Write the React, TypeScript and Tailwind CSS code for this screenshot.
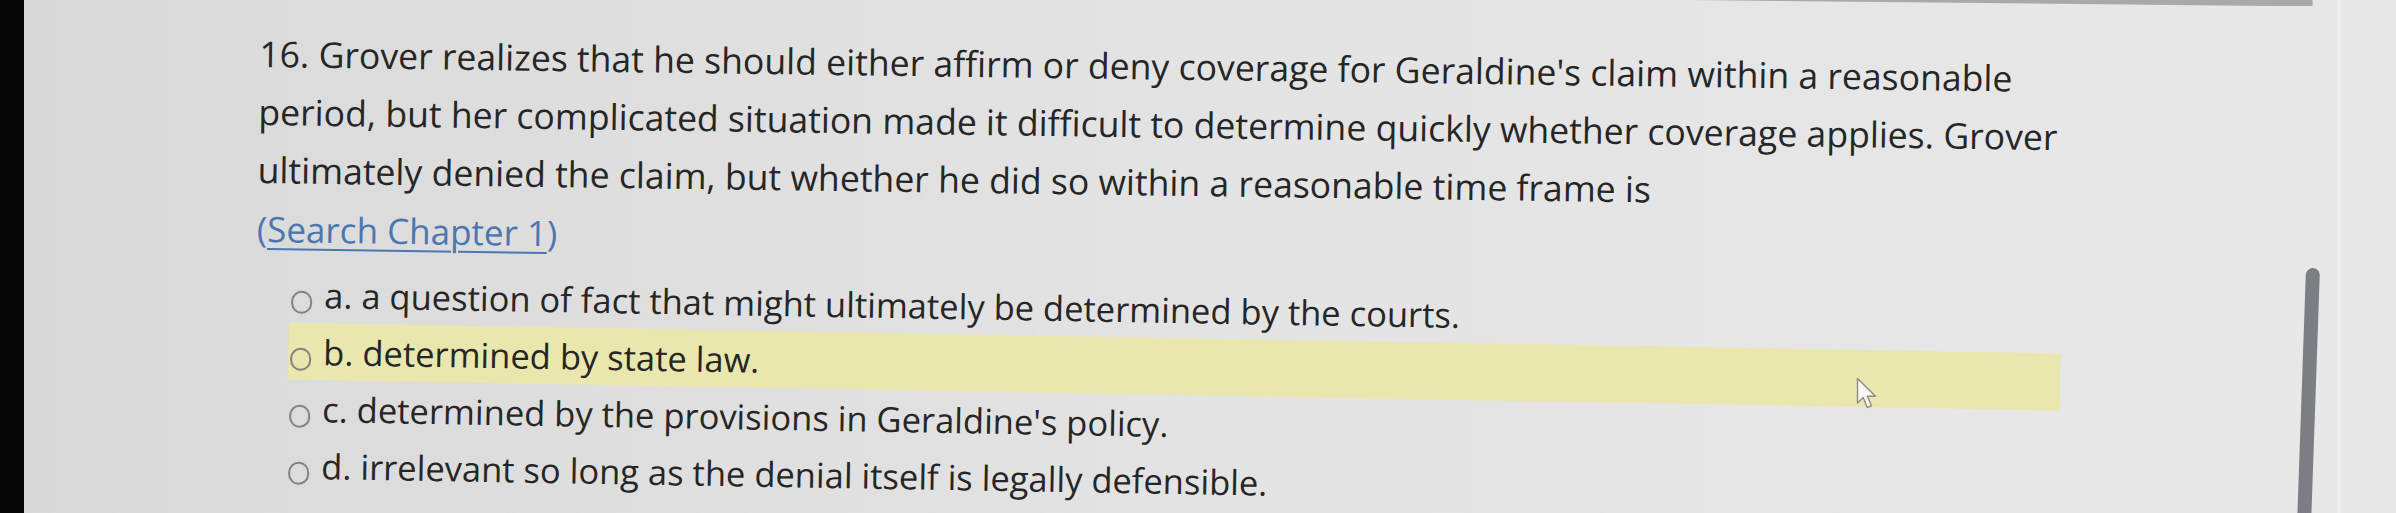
import React from "react";

const questionLines = [
  "16. Grover realizes that he should either affirm or deny coverage for Geraldine's claim within a reasonable",
  "period, but her complicated situation made it difficult to determine quickly whether coverage applies. Grover",
  "ultimately denied the claim, but whether he did so within a reasonable time frame is",
];

const options = [
  { key: "a", text: "a. a question of fact that might ultimately be determined by the courts.", hl: false },
  { key: "b", text: "b. determined by state law.", hl: true },
  { key: "c", text: "c. determined by the provisions in Geraldine's policy.", hl: false },
  { key: "d", text: "d. irrelevant so long as the denial itself is legally defensible.", hl: false },
];

function Cursor() {
  return (
    <svg width="22" height="36" viewBox="0 0 22 36" className="absolute left-[1856px] top-[377px]">
      <path
        d="M1.5 1.5 L1.5 26 L7.2 20.6 L11.2 30.5 L15.4 28.8 L11.4 19.2 L19.5 19.2 Z"
        fill="#f7f7f4"
        stroke="#8d8d86"
        strokeWidth="1.4"
        strokeLinejoin="round"
      />
    </svg>
  );
}

export default function App() {
  return (
    <div
      className="relative w-[2396px] h-[513px] flex overflow-hidden bg-[#e4e4e4]"
      style={{ fontFamily: '"Open Sans", "Noto Sans", sans-serif' }}
    >
      <div className="w-[24px] shrink-0 bg-[#050505]" />
      <div className="flex-1 flex flex-col bg-gradient-to-r from-[#d9d9d9] via-[#e3e3e3] to-[#e8e8e8]">
        <div className="h-[6px] shrink-0 bg-[#a9a9a9] [clip-path:polygon(72%_0,98.9%_0,98.9%_100%,97%_100%)]" />
        <div className="flex-1 flex">
          <div className="flex-1 origin-[236px_0px] rotate-[0.8deg] pl-[236px] pt-[18px] text-[#262626]">
            <div className="text-[35.6px] leading-[58px] whitespace-nowrap">
              {questionLines.map((l) => (
                <div key={l}>{l}</div>
              ))}
            </div>
            <div className="text-[35px] leading-[58px] mt-[2px] whitespace-nowrap text-[#4a77b0]">
              (<span className="underline decoration-[2px] underline-offset-[6px]">Search Chapter 1</span>)
            </div>
            <div className="mt-[7px] text-[34.5px] leading-[57px] origin-left rotate-[0.2deg]">
              {options.map((o) => (
                <div
                  key={o.key}
                  className={`ml-[33px] w-[1772px] pl-[2px] flex items-start whitespace-nowrap ${
                    o.hl ? "bg-[#e9e7ad]" : ""
                  }`}
                >
                  <span className="mt-[25px] w-[21px] h-[23px] shrink-0 rounded-full border-[2px] border-[#838383]" />
                  <span className="ml-[12px] text-[#262626]">{o.text}</span>
                </div>
              ))}
            </div>
          </div>
          <div className="w-[14px] shrink-0 mr-[18px] pt-[262px]">
            <div className="w-[14px] h-[260px] rounded-t-full bg-[#7b7e82] rotate-[2deg] origin-top" />
          </div>
        </div>
      </div>
      <div className="w-[58px] shrink-0 bg-[#e8e8e8] border-l-[2px] border-[#f1f1f1]" />
      <Cursor />
    </div>
  );
}
